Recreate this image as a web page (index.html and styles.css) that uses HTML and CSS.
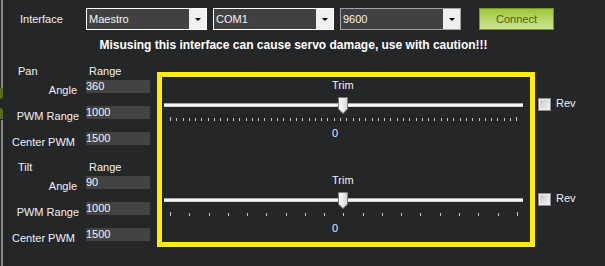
FILE: index.html
```html
<!DOCTYPE html>
<html>
<head>
<meta charset="utf-8">
<link rel="stylesheet" href="styles.css">
</head>
<body>
<div class="app">
  <svg class="splitter" width="4" height="32" viewBox="0 0 4 32"><polygon points="0,0 3,0 3,9 1,11 0,11" fill="#5b6b1e"/><polygon points="0,20 1,20 3,22 3,31 0,31" fill="#5b6b1e"/></svg>
  <div class="toolbar">
    <span class="toolbar-label">Interface</span>
    <div class="combo"><span class="combo-text">Maestro</span><span class="combo-btn"><span class="combo-arrow"></span></span></div>
    <div class="combo"><span class="combo-text">COM1</span><span class="combo-btn"><span class="combo-arrow"></span></span></div>
    <div class="combo combo--idle"><span class="combo-text">9600</span><span class="combo-btn"><span class="combo-arrow"></span></span></div>
    <button class="connect">Connect</button>
  </div>
  <div class="warning">Misusing this interface can cause servo damage, use with caution!!!</div>
  <div class="main">
    <div class="axes">
      <div class="axis">
        <div class="axis-head"><span class="axis-name">Pan</span><span>Range</span></div>
        <div class="field"><span class="field-label field-label--angle">Angle</span><span class="field-input">360</span></div>
        <div class="field"><span class="field-label field-label--range">PWM Range</span><span class="field-input">1000</span></div>
        <div class="field"><span class="field-label field-label--center">Center PWM</span><span class="field-input">1500</span></div>
      </div>
      <div class="axis">
        <div class="axis-head"><span class="axis-name">Tilt</span><span>Range</span></div>
        <div class="field"><span class="field-label field-label--angle">Angle</span><span class="field-input">90</span></div>
        <div class="field"><span class="field-label field-label--range">PWM Range</span><span class="field-input">1000</span></div>
        <div class="field"><span class="field-label field-label--center">Center PWM</span><span class="field-input">1500</span></div>
      </div>
    </div>
    <div class="trim-box">
      <div class="slider">
        <div class="slider-title">Trim</div>
        <div class="slider-rail">
          <div class="slider-track"></div>
          <svg class="slider-thumb" width="10" height="17" viewBox="0 0 10 17"><defs><linearGradient id="tg1" x1="0" y1="0" x2="1" y2="0"><stop offset="0" stop-color="#ffffff"/><stop offset="1" stop-color="#d6d6d6"/></linearGradient></defs><path d="M0.5 0.5 H9.5 V12 L5 16.5 L0.5 12 Z" fill="url(#tg1)" stroke="#7c7c7c"/></svg>
        </div>
        <div class="slider-ticks">
          <i></i><i></i><i></i><i></i><i></i><i></i><i></i><i></i>
          <i></i><i></i><i></i><i></i><i></i><i></i><i></i><i></i>
          <i></i><i></i><i></i><i></i><i></i><i></i><i></i><i></i>
          <i></i><i></i><i></i><i></i><i></i><i></i><i></i><i></i>
          <i></i><i></i><i></i><i></i><i></i><i></i><i></i><i></i>
          <i></i><i></i><i></i><i></i><i></i><i></i><i></i><i></i>
          <i></i><i></i><i></i><i></i><i></i><i></i><i></i><i></i>
        </div>
        <div class="slider-value">0</div>
      </div>
      <div class="slider">
        <div class="slider-title">Trim</div>
        <div class="slider-rail">
          <div class="slider-track"></div>
          <svg class="slider-thumb" width="10" height="17" viewBox="0 0 10 17"><defs><linearGradient id="tg2" x1="0" y1="0" x2="1" y2="0"><stop offset="0" stop-color="#ffffff"/><stop offset="1" stop-color="#d6d6d6"/></linearGradient></defs><path d="M0.5 0.5 H9.5 V12 L5 16.5 L0.5 12 Z" fill="url(#tg2)" stroke="#7c7c7c"/></svg>
        </div>
        <div class="slider-ticks">
          <i></i><i></i><i></i><i></i><i></i><i></i><i></i><i></i><i></i><i></i>
          <i></i><i></i><i></i><i></i><i></i><i></i><i></i><i></i><i></i>
        </div>
        <div class="slider-value">0</div>
      </div>
    </div>
    <div class="revs">
      <div class="rev"><span class="check"></span><span class="rev-text">Rev</span></div>
      <div class="rev"><span class="check"></span><span class="rev-text">Rev</span></div>
    </div>
  </div>
</div>
</body>
</html>
```

FILE: styles.css
```css
* { box-sizing: border-box; }
html, body { margin: 0; background: #252628; }
body {
  font-family: "Liberation Sans", Arial, sans-serif;
  font-size: 11px;
  line-height: 13px;
  color: #f2f2f2;
}
.app {
  position: relative;
  width: 605px;
  height: 266px;
  overflow: hidden;
  padding-top: 8px;
  background: linear-gradient(to right, #252628 1px, #8a8a8a 1px, #8a8a8a 3px, #252628 3px) 0 0 / 3px 100% no-repeat, #252628;
}
.splitter { position: absolute; left: 0; top: 88px; background: #252628; }

.toolbar { display: flex; align-items: center; height: 22px; padding-left: 20px; }
.toolbar-label { width: 66px; }
.combo {
  display: flex;
  width: 121px;
  height: 22px;
  margin-right: 6px;
  border: 1px solid #ffffff;
  background: #414143;
}
.combo--idle { border-color: #a3a3a3; }
.combo-text { flex: 1; padding-left: 2px; line-height: 20px; color: #f4f4f4; }
.combo-btn {
  width: 17px;
  background: #f0f0f0;
  display: flex;
  align-items: center;
  justify-content: center;
}
.combo-arrow {
  width: 0; height: 0;
  border-left: 3px solid transparent;
  border-right: 3px solid transparent;
  border-top: 3px solid #000;
}
.connect {
  margin-left: 12px;
  width: 75px;
  height: 22px;
  padding: 0;
  border: 1px solid #75942a;
  background: linear-gradient(#9cc63a, #b8d96a 55%, #cce494);
  color: #4d5f12;
  font: 11px/20px "Liberation Sans", Arial, sans-serif;
}

.warning {
  margin-top: 8px;
  padding-right: 18px;
  text-align: center;
  font-weight: bold;
  font-size: 12px;
  line-height: 14px;
  color: #ffffff;
}

.main { display: flex; align-items: flex-start; margin-top: 13px; }

.axes { width: 157px; }
.axis { height: 96px; }
.axis-head { display: flex; height: 13px; margin-bottom: 2px; }
.axis-name { width: 89px; padding-left: 18px; }
.field { display: flex; height: 26px; }
.field-label { width: 86px; text-align: right; padding-top: 4px; }
.field-label--angle { padding-right: 9px; }
.field-label--range { padding-right: 7px; }
.field-label--center { padding-right: 11px; }
.field-input { width: 64px; height: 13px; background: #434345; color: #f4f4f4; }

.trim-box {
  margin-top: 7px;
  width: 378px;
  height: 175px;
  border: 5px solid #ffee00;
}
.slider { height: 95px; padding-top: 2px; }
.slider:last-child { height: auto; }
.slider-title, .slider-value { padding-left: 170px; }
.slider-value { margin-top: 6px; color: #e4eef9; }
.slider-rail { position: relative; margin-top: 5px; height: 17px; padding: 6px 0 0 2px; }
.slider-track {
  width: 359px;
  height: 4px;
  background: linear-gradient(#a9a9a9 0 1px, #f6f6f6 1px 3px, #d4d4d4 3px);
}
.slider-thumb { position: absolute; left: 176px; top: 0; }
.slider-ticks {
  display: flex;
  justify-content: space-between;
  align-items: flex-end;
  margin: 3px 0 0 8px;
  width: 348px;
  height: 4px;
}
.slider-ticks i { display: block; width: 1px; height: 3px; background: #c4c4c4; }
.slider-ticks i:first-child, .slider-ticks i:last-child { height: 4px; }

.revs { margin: 33px 0 0 3px; }
.rev { display: flex; align-items: flex-start; height: 95px; }
.check {
  width: 13px;
  height: 13px;
  margin-right: 5px;
  border: 1px solid #8c8c8c;
  box-shadow: inset 0 0 0 1px #f2f2f2;
  background: linear-gradient(135deg, #c4c4c4, #f6f6f6);
}
.rev-text { margin-top: -1px; }
```
